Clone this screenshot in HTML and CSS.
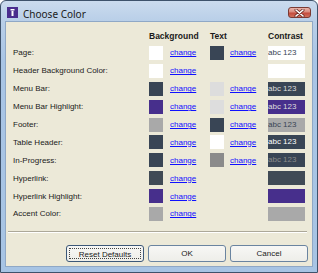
FILE: index.html
```html
<!DOCTYPE html>
<html lang="en">
<head>
  <meta charset="UTF-8">
  <title>Choose Color</title>
  <link rel="stylesheet" href="styles.css">
</head>
<body>

<div class="window">
  <div class="titlebar">
    <svg class="app-icon" width="11" height="11" viewBox="0 0 11 11">
      <rect x="0" y="0" width="11" height="11" fill="#4a2d8e"/>
      <rect x="3.5" y="2" width="4" height="1.5" fill="#fff"/>
      <rect x="4.5" y="4" width="2" height="5" fill="#fff"/>
    </svg>
    <span class="title">Choose Color</span>
    <div class="close-btn">
      <svg width="11" height="8" viewBox="0 0 11 8">
        <path d="M2 1 L9 7 M9 1 L2 7" stroke="#6b2a24" stroke-width="3" stroke-linecap="round"/>
        <path d="M2 1 L9 7 M9 1 L2 7" stroke="#fff" stroke-width="1.6" stroke-linecap="round"/>
      </svg>
    </div>
  </div>

  <div class="client">
    <div class="color-table">
      <div></div>
      <div class="col-head span2">Background</div>
      <div class="col-head span2">Text</div>
      <div class="col-head">Contrast</div>

      <div class="label">Page:</div>
      <div><span class="swatch white"></span></div>
      <div><a href="#">change</a></div>
      <div><span class="swatch dark"></span></div>
      <div><a href="#">change</a></div>
      <div class="contrast white" style="color:#394555">abc 123</div>

      <div class="label">Header Background Color:</div>
      <div><span class="swatch white"></span></div>
      <div><a href="#">change</a></div>
      <div></div>
      <div></div>
      <div class="contrast white"></div>

      <div class="label">Menu Bar:</div>
      <div><span class="swatch dark"></span></div>
      <div><a href="#">change</a></div>
      <div><span class="swatch light"></span></div>
      <div><a href="#">change</a></div>
      <div class="contrast dark" style="color:#dddddd">abc 123</div>

      <div class="label">Menu Bar Highlight:</div>
      <div><span class="swatch purple"></span></div>
      <div><a href="#">change</a></div>
      <div><span class="swatch light"></span></div>
      <div><a href="#">change</a></div>
      <div class="contrast purple" style="color:#dddddd">abc 123</div>

      <div class="label">Footer:</div>
      <div><span class="swatch gray"></span></div>
      <div><a href="#">change</a></div>
      <div><span class="swatch dark"></span></div>
      <div><a href="#">change</a></div>
      <div class="contrast gray" style="color:#394555">abc 123</div>

      <div class="label">Table Header:</div>
      <div><span class="swatch dark"></span></div>
      <div><a href="#">change</a></div>
      <div><span class="swatch white"></span></div>
      <div><a href="#">change</a></div>
      <div class="contrast dark" style="color:#ffffff">abc 123</div>

      <div class="label">In-Progress:</div>
      <div><span class="swatch dark"></span></div>
      <div><a href="#">change</a></div>
      <div><span class="swatch midgray"></span></div>
      <div><a href="#">change</a></div>
      <div class="contrast dark" style="color:#8b8b8b">abc 123</div>

      <div class="label">Hyperlink:</div>
      <div><span class="swatch slate"></span></div>
      <div><a href="#">change</a></div>
      <div></div>
      <div></div>
      <div class="contrast slate"></div>

      <div class="label">Hyperlink Highlight:</div>
      <div><span class="swatch purple"></span></div>
      <div><a href="#">change</a></div>
      <div></div>
      <div></div>
      <div class="contrast purple"></div>

      <div class="label">Accent Color:</div>
      <div><span class="swatch gray"></span></div>
      <div><a href="#">change</a></div>
      <div></div>
      <div></div>
      <div class="contrast gray"></div>
    </div>

    <div class="separator"></div>

    <div class="button-row">
      <button class="btn focused"><span>Reset Defaults</span></button>
      <button class="btn"><span>OK</span></button>
      <button class="btn"><span>Cancel</span></button>
    </div>
  </div>
</div>

</body>
</html>
```

FILE: styles.css
```css
body {
  margin: 0;
  font-family: "Liberation Sans", Arial, sans-serif;
  font-size: 8px;
  color: #1a1a1a;
  background: #ffffff;
}
.window {
  width: 318px;
  height: 273px;
  box-sizing: border-box;
  border: 1px solid #3e526b;
  border-radius: 6px 6px 0 0;
  background: linear-gradient(#cbdbee 0px, #b9cfe8 20px, #a9c5e5 60px, #a7c4e4 100%);
  display: flex;
  flex-direction: column;
}
.titlebar {
  height: 20px;
  display: flex;
  align-items: flex-start;
  padding: 0 6px;
}
.app-icon {
  margin-top: 6px;
  flex-shrink: 0;
}
.title {
  font-family: "Noto Sans", sans-serif;
  font-size: 10px;
  line-height: 12px;
  margin-top: 7px;
  margin-left: 5px;
  color: #1b1b1b;
}
.close-btn {
  margin-left: auto;
  margin-top: 6px;
  width: 23px;
  height: 11px;
  box-sizing: border-box;
  border: 1px solid #7a3a33;
  border-radius: 3px;
  background: linear-gradient(#e9b3a9 0%, #d98a7d 45%, #c44a3c 55%, #d0705c 100%);
  display: flex;
  align-items: center;
  justify-content: center;
}
.client {
  margin: 0 4px;
  flex: 1;
  margin-bottom: 5px;
  border: 1px solid #8fa8c6;
  background: #ece9d8;
  padding: 5px 4px 0 7px;
  display: flex;
  flex-direction: column;
}
.color-table {
  display: grid;
  grid-template-columns: 136px 21px 40px 20px 38px 37px;
  grid-template-rows: 17px repeat(10, 17.9px);
  align-items: center;
}
.col-head {
  font-weight: bold;
  font-size: 8.5px;
}
.span2 {
  grid-column: span 2;
}
.label {
  white-space: nowrap;
}
.swatch {
  display: block;
  width: 14px;
  height: 14px;
}
a {
  color: #1010ff;
  text-decoration: underline;
}
.contrast {
  height: 14px;
  line-height: 14px;
  white-space: nowrap;
  overflow: hidden;
}
.white { background: #ffffff; }
.dark { background: #394555; }
.slate { background: #404a55; }
.purple { background: #472f8c; }
.gray { background: #a9a9a9; }
.light { background: #dddddd; }
.midgray { background: #8b8b8b; }
.separator {
  margin: 8px 1px 0 -5px;
  border-top: 1px solid #aca899;
  border-bottom: 1px solid #ffffff;
}
.button-row {
  display: flex;
  justify-content: flex-end;
  gap: 4px;
  margin-top: 12px;
}
.btn {
  width: 78px;
  height: 17px;
  padding: 0;
  box-sizing: border-box;
  border: 1px solid #6a84a0;
  border-radius: 3px;
  background: linear-gradient(#f7f7f5, #eeeee9);
  font-family: "Liberation Sans", Arial, sans-serif;
  font-size: 8px;
  color: #1a1a1a;
  display: flex;
  align-items: center;
  justify-content: center;
}
.btn.focused {
  border-color: #3c5878;
}
.btn.focused span {
  flex: 1;
  margin: 0 2px;
  height: 11px;
  line-height: 11px;
  box-sizing: border-box;
  border: 1px dotted #444;
  text-align: center;
}
```
